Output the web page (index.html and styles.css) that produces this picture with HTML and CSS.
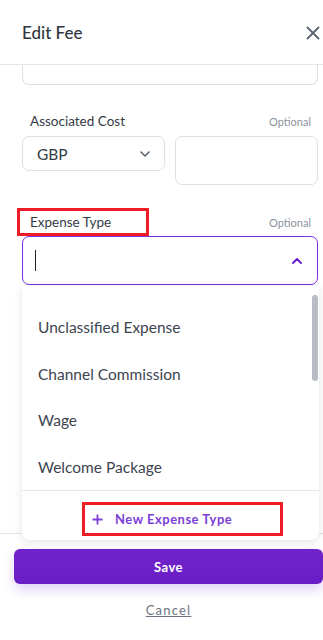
FILE: index.html
```html
<!DOCTYPE html>
<html lang="en">
<head>
    <meta charset="UTF-8">
    <meta name="viewport" content="width=device-width, initial-scale=1.0">
    <title>Edit Fee</title>
    <link rel="stylesheet" href="styles.css">
</head>
<body>
    <div class="header">
        <h2>Edit Fee</h2>
        <svg class="close" width="14" height="14" viewBox="0 0 14 14">
            <path d="M1.5 1.5 L12.5 12.5 M12.5 1.5 L1.5 12.5" stroke="#5b6572" stroke-width="1.8" stroke-linecap="round"/>
        </svg>
    </div>

    <div class="content">
        <div class="stub"></div>

        <div class="field">
            <div class="label-row">
                <label>Associated Cost</label>
                <span class="optional">Optional</span>
            </div>
            <div class="cost-row">
                <div class="select">
                    <span>GBP</span>
                    <svg width="12" height="8" viewBox="0 0 12 8">
                        <path d="M2 2 L6 6 L10 2" fill="none" stroke="#5b6572" stroke-width="1.6" stroke-linecap="round" stroke-linejoin="round"/>
                    </svg>
                </div>
                <div class="amount"></div>
            </div>
        </div>

        <div class="field expense">
            <div class="label-row">
                <label class="marked">Expense Type</label>
                <span class="optional">Optional</span>
            </div>
            <div class="combo">
                <span class="caret"></span>
                <svg width="12" height="8" viewBox="0 0 12 8">
                    <path d="M2 6 L6 2 L10 6" fill="none" stroke="#6a1fd0" stroke-width="2" stroke-linecap="round" stroke-linejoin="round"/>
                </svg>
            </div>
            <div class="dropdown">
                <ul class="options">
                    <li>Unclassified Expense</li>
                    <li>Channel Commission</li>
                    <li>Wage</li>
                    <li>Welcome Package</li>
                </ul>
                <div class="scrollbar"></div>
                <div class="dropdown-foot">
                    <span class="new-type">
                        <svg width="11" height="11" viewBox="0 0 11 11">
                            <path d="M5.5 0.5 V10.5 M0.5 5.5 H10.5" stroke="#7b3fd8" stroke-width="1.8"/>
                        </svg>
                        New Expense Type
                    </span>
                </div>
            </div>
        </div>
    </div>

    <div class="footer">
        <button class="save">Save</button>
        <a class="cancel">Cancel</a>
    </div>
</body>
</html>
```

FILE: styles.css
```css
body {
    margin: 0;
    width: 323px;
    height: 640px;
    overflow: hidden;
    background: #ffffff;
    font-family: Lato, "Noto Sans", sans-serif;
    color: #343b45;
}
.header {
    height: 64px;
    display: flex;
    align-items: center;
    justify-content: space-between;
    padding: 0 3px 0 22px;
    border-bottom: 1px solid #e3e5ea;
}
.header h2 {
    margin: 0;
    font-size: 17px;
    font-weight: 500;
    color: #2f3640;
}
.close {
    margin-top: 2px;
}
.content {
    height: 468px;
    padding: 0 5px 0 22px;
}
.stub {
    height: 19px;
    border: 1px solid #dde0e5;
    border-top: none;
    border-radius: 0 0 7px 7px;
}
.field {
    margin-top: 25px;
}
.label-row {
    display: flex;
    justify-content: space-between;
    align-items: center;
    height: 22px;
    padding: 0 7px 0 8px;
}
.label-row label {
    font-size: 13.5px;
    color: #343b45;
}
.optional {
    font-size: 11px;
    color: #8c939d;
}
.cost-row {
    display: flex;
    gap: 10px;
    margin-top: 4px;
    align-items: flex-start;
}
.select {
    box-sizing: border-box;
    width: 143px;
    height: 35px;
    border: 1px solid #dde0e5;
    border-radius: 7px;
    display: flex;
    align-items: center;
    justify-content: space-between;
    padding: 0 13px 0 14px;
    font-size: 15.5px;
    color: #343b45;
}
.amount {
    box-sizing: border-box;
    width: 143px;
    height: 49px;
    border: 1px solid #dde0e5;
    border-radius: 7px;
}
.expense {
    margin-top: 23px;
    position: relative;
}
.expense .label-row {
    height: 28px;
}
.marked {
    box-sizing: border-box;
    width: 132px;
    margin-left: -13px;
    padding: 0 10px 0 10px;
    height: 28px;
    line-height: 22px;
    border: 3px solid #ee1c25;
}
.combo {
    box-sizing: border-box;
    height: 49px;
    border: 1px solid #7b2fe0;
    border-radius: 7px;
    display: flex;
    align-items: center;
    justify-content: space-between;
    padding: 0 14px 0 12px;
}
.caret {
    width: 1px;
    height: 21px;
    background: #222;
}
.dropdown {
    position: absolute;
    top: 78px;
    left: 0;
    width: 297px;
    height: 254px;
    background: #fff;
    border-radius: 0 0 8px 8px;
    box-shadow: 0 2px 10px rgba(30, 40, 60, 0.12);
    z-index: 2;
}
.options {
    list-style: none;
    margin: 0;
    padding: 18px 0 0 0;
    border-bottom: 1px solid #e3e5ea;
}
.options li {
    height: 46.5px;
    line-height: 46.5px;
    padding-left: 16px;
    font-size: 15.5px;
    color: #3d4450;
}
.scrollbar {
    position: absolute;
    top: 9px;
    right: 1px;
    width: 6px;
    height: 86px;
    border-radius: 3px;
    background: #b8bdc4;
}
.dropdown-foot {
    display: flex;
    padding: 11px 0 0 60px;
}
.new-type {
    display: flex;
    align-items: center;
    gap: 12px;
    box-sizing: border-box;
    width: 201px;
    height: 34px;
    padding-left: 7px;
    border: 3px solid #ee1c25;
    font-size: 13px;
    font-weight: 700;
    letter-spacing: 0.5px;
    color: #7b3fd8;
}
.footer {
    border-top: 1px solid #e3e5ea;
    padding: 15px 0 0 14px;
    text-align: center;
}
.save {
    display: block;
    width: 309px;
    height: 35px;
    border: none;
    border-radius: 6px;
    background: linear-gradient(#7123cb, #6a1dc6);
    color: #fff;
    font-family: inherit;
    font-size: 13px;
    font-weight: 700;
    letter-spacing: 0.5px;
    box-shadow: 0 6px 12px rgba(120, 60, 220, 0.22);
}
.cancel {
    display: inline-block;
    margin-top: 18px;
    font-size: 13px;
    letter-spacing: 1.2px;
    color: #6b7480;
    text-decoration: underline;
}
```
